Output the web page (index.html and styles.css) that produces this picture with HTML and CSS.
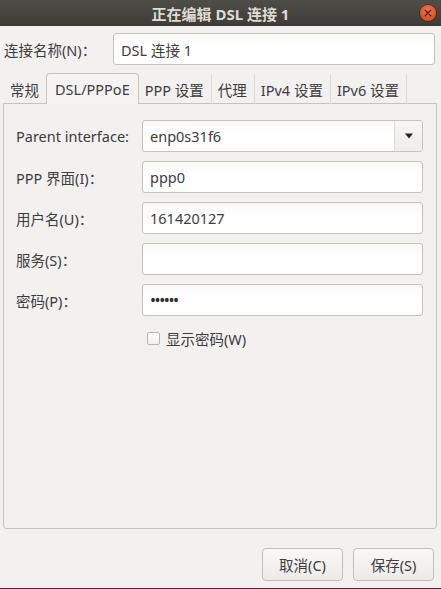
FILE: index.html
```html
<!DOCTYPE html>
<html lang="zh-CN">
<head>
<meta charset="utf-8">
<title>正在编辑 DSL 连接 1</title>
<link rel="stylesheet" href="styles.css">
</head>
<body>
<div class="window">
  <div class="titlebar">
    <span class="title">正在编辑 DSL 连接 1</span>
    <span class="close"><svg width="16" height="16" viewBox="0 0 16 16"><path d="M5.3 5.3 L10.7 10.7 M10.7 5.3 L5.3 10.7" stroke="#3a2318" stroke-width="1.3" stroke-linecap="round"/></svg></span>
  </div>
  <div class="name-row">
    <label class="name-label">连接名称(N)：</label>
    <div class="entry name-entry">DSL 连接 1</div>
  </div>
  <div class="tabs">
    <div class="tab tab-first">常规</div>
    <div class="tab active">DSL/PPPoE</div>
    <div class="tab">PPP 设置</div>
    <div class="tab">代理</div>
    <div class="tab">IPv4 设置</div>
    <div class="tab">IPv6 设置</div>
  </div>
  <div class="panel">
    <div class="form">
      <label class="lbl">Parent interface:</label>
      <div class="combo">
        <div class="combo-text">enp0s31f6</div>
        <div class="combo-btn"><svg width="10" height="6" viewBox="0 0 10 6"><path d="M1 0.5 H9 L5 5.5 Z" fill="#222"/></svg></div>
      </div>
      <label class="lbl">PPP 界面(I)：</label>
      <div class="entry">ppp0</div>
      <label class="lbl">用户名(U)：</label>
      <div class="entry">161420127</div>
      <label class="lbl">服务(S)：</label>
      <div class="entry"></div>
      <label class="lbl">密码(P)：</label>
      <div class="entry dots">••••••</div>
      <div></div>
      <div class="check-row"><span class="checkbox"></span><span class="check-label">显示密码(W)</span></div>
    </div>
  </div>
  <div class="buttons">
    <button class="btn">取消(C)</button>
    <button class="btn">保存(S)</button>
  </div>
  <div class="bottom-line"></div>
</div>
</body>
</html>
```
FILE: styles.css
```css
* { box-sizing: border-box; }
html, body { margin: 0; padding: 0; }
body {
  width: 441px;
  height: 589px;
  background: #f2f1f0;
  font-family: "Noto Sans", "Noto Sans CJK SC", sans-serif;
  font-size: 14.5px;
  color: #3c3c3c;
  overflow: hidden;
}
.window {
  height: 589px;
  display: flex;
  flex-direction: column;
}
.titlebar {
  height: 26px;
  flex: none;
  background: linear-gradient(#4f4d48, #3d3c38);
  display: flex;
  align-items: center;
  justify-content: center;
  position: relative;
}
.title {
  color: #dfdbd2;
  font-weight: bold;
  font-size: 15px;
  font-family: "Noto Sans", "Noto Sans CJK SC", sans-serif;
}
.close {
  position: absolute;
  right: 5px;
  top: 5px;
  width: 16px;
  height: 16px;
  border-radius: 50%;
  background: radial-gradient(circle at 50% 35%, #f4744a, #e0501d 70%, #c44414);
  box-shadow: 0 0 0 1px rgba(0,0,0,0.25);
  display: flex;
}
.name-row {
  display: flex;
  align-items: center;
  margin: 7px 6px 0 4px;
  height: 32px;
}
.name-label { width: 109px; flex: none; }
.entry {
  height: 32px;
  border: 1px solid #c8c2bc;
  border-radius: 3px;
  background: linear-gradient(#f8f8f7, #ffffff 40%);
  display: flex;
  align-items: center;
  padding-left: 7px;
  color: #3c3c3c;
}
.name-entry { flex: 1; }
.tabs {
  display: flex;
  margin: 8px 0 0 3px;
  height: 31px;
  position: relative;
  z-index: 1;
}
.tab {
  height: 30px;
  margin-top: 1px;
  padding: 0 7px 0 6px;
  display: flex;
  align-items: center;
  border-right: 1px solid #dedbd8;
}
.tab-first { padding-left: 7px; padding-right: 7px; border-right: none; }
.active {
  height: 31px;
  margin-top: 0;
  padding: 0 8px;
  border: 1px solid #c8c2bc;
  border-bottom: none;
  border-radius: 4px 4px 0 0;
  background: #f4f3f2;
}
.panel {
  margin: -1px 4px 0 3px;
  height: 426px;
  border: 1px solid #c8c2bc;
  border-radius: 0 0 3px 3px;
  background: #f2f1f0;
  padding: 16px 13px 0 12px;
  flex: none;
}
.form {
  display: grid;
  grid-template-columns: 126px 1fr;
  row-gap: 9px;
  align-items: center;
}
.lbl { white-space: nowrap; }
.combo {
  height: 32px;
  border: 1px solid #c8c2bc;
  border-radius: 3px;
  background: linear-gradient(#f8f8f7, #ffffff 40%);
  display: flex;
}
.combo-text {
  flex: 1;
  display: flex;
  align-items: center;
  padding-left: 7px;
}
.combo-btn {
  width: 28px;
  border-left: 1px solid #dcd8d4;
  display: flex;
  align-items: center;
  justify-content: center;
  background: linear-gradient(#f7f6f5, #efedeb);
  border-radius: 0 3px 3px 0;
}
.dots { font-size: 16px; letter-spacing: -1.4px; color: #2e2e2e; }
.check-row {
  display: flex;
  align-items: center;
  padding-left: 5px;
  margin-top: 3px;
}
.checkbox {
  width: 13px;
  height: 13px;
  border: 1px solid #b9b3ad;
  border-radius: 2px;
  background: linear-gradient(#ffffff, #f1f0ef);
  margin-right: 6px;
}
.buttons {
  display: flex;
  justify-content: flex-end;
  gap: 10px;
  margin: 19px 7px 0 0;
}
.btn {
  width: 81px;
  height: 33px;
  border: 1px solid #c4beb8;
  border-radius: 4px;
  background: linear-gradient(#f9f8f7, #ecebe9);
  font-family: "Noto Sans", "Noto Sans CJK SC", sans-serif;
  font-size: 14.5px;
  color: #3c3c3c;
  padding: 0;
}
.bottom-line {
  margin-top: auto;
  height: 1px;
  background: #6e1a3c;
}
```
